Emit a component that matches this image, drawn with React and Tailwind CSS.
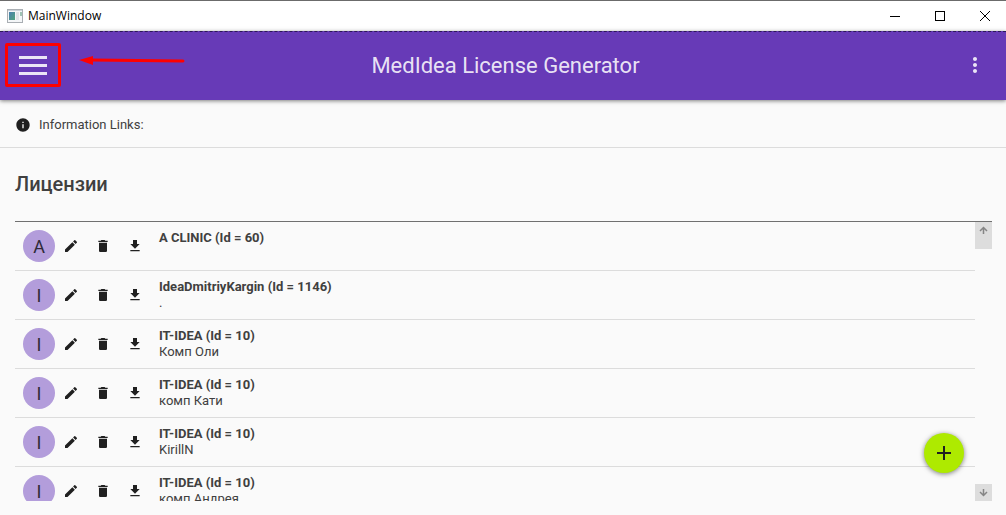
import { MdAdd, MdDelete, MdEdit, MdInfo, MdMoreVert } from 'react-icons/md';

const licenses = [
  { name: 'A CLINIC', id: 60, note: '' },
  { name: 'IdeaDmitriyKargin', id: 1146, note: '.' },
  { name: 'IT-IDEA', id: 10, note: 'Комп Оли' },
  { name: 'IT-IDEA', id: 10, note: 'комп Кати' },
  { name: 'IT-IDEA', id: 10, note: 'KirillN' },
  { name: 'IT-IDEA', id: 10, note: 'комп Андрея' },
];

const DownloadIcon = () => (
  <svg width="16" height="16" viewBox="0 0 24 24" fill="currentColor">
    <path d="M5 20h14v-2H5v2zM19 9h-4V3H9v6H5l7 7 7-7z" />
  </svg>
);

const ArrowIcon = ({ className }) => (
  <svg width="9" height="9" viewBox="0 0 9 9" fill="none" stroke="currentColor" strokeWidth="1.5" className={className}>
    <path d="M4.5 8V1.5M1 5l3.5-3.5L8 5" />
  </svg>
);

const IconButton = ({ label, children }) => (
  <button type="button" aria-label={label} className="flex h-8 w-8 items-center justify-center text-[#202020]">
    {children}
  </button>
);

const TitleBar = () => (
  <div className="flex h-[31px] shrink-0 items-center border-t border-[#6b6b6b] bg-white pl-[7px] text-black">
    <svg width="16" height="14" viewBox="0 0 16 14" className="mr-[5px]">
      <defs>
        <linearGradient id="pane" x1="0" y1="0" x2="1" y2="1">
          <stop offset="0" stopColor="#4a80b0" />
          <stop offset="1" stopColor="#4fa37c" />
        </linearGradient>
      </defs>
      <rect x="0.5" y="0.5" width="15" height="13" fill="#f4f6f8" stroke="#a9aeb3" />
      <path d="M1 1.5h14" stroke="#c9d1d8" />
      <rect x="2" y="3" width="6" height="8" fill="url(#pane)" />
      <rect x="9" y="3" width="3" height="8" fill="#dfe3e6" />
      <rect x="13" y="3" width="2" height="4" fill="#9fc3b4" />
    </svg>
    <span className="font-['Open_Sans','Noto_Sans',sans-serif] text-[12px]">MainWindow</span>
    <div className="mr-[-1px] ml-auto flex h-full">
      <button type="button" aria-label="Minimize" className="flex w-[45px] items-center justify-center">
        <svg width="10" height="10" stroke="black"><path d="M0 5.5h10" /></svg>
      </button>
      <button type="button" aria-label="Maximize" className="flex w-[45px] items-center justify-center">
        <svg width="10" height="10" fill="none" stroke="black"><rect x="0.5" y="0.5" width="9" height="9" /></svg>
      </button>
      <button type="button" aria-label="Close" className="flex w-[45px] items-center justify-center">
        <svg width="10" height="10" stroke="black"><path d="M0 0l10 10M10 0L0 10" /></svg>
      </button>
    </div>
  </div>
);

const AppBar = () => (
  <header className="relative z-10 grid h-[69px] shrink-0 grid-cols-[1fr_auto_1fr] items-center border-t border-dashed border-[#2b1a55] bg-[#673ab7] pb-[2px] pl-[5px] text-white/87 shadow-[0_1px_4px_rgba(0,0,0,0.5)]">
    <div className="flex items-center gap-[18px]">
      <button type="button" aria-label="Menu" className="flex h-[44px] w-[56px] items-center justify-center rounded-xs border-3 border-[#ff0000]">
        <svg width="28" height="19" viewBox="0 0 28 19" fill="currentColor">
          <path d="M0 0h28v3H0zM0 8h28v3H0zM0 16h28v3H0z" />
        </svg>
      </button>
      <svg width="106" height="12" viewBox="0 0 106 12" className="mb-[10px]">
        <path d="M13 6l91 1" stroke="#ff0000" strokeWidth="3" strokeLinecap="round" />
        <path d="M0 6l14-4v9z" fill="#ff0000" />
      </svg>
    </div>
    <h1 className="text-[22px]">MedIdea License Generator</h1>
    <button type="button" aria-label="More" className="mr-[19px] justify-self-end">
      <MdMoreVert size={24} />
    </button>
  </header>
);

const LicenseRow = ({ name, id, note }) => (
  <li className="flex h-[49px] border-b border-[#dcdcdc] px-2 pt-2">
    <div className="flex h-8 w-8 shrink-0 items-center justify-center rounded-full bg-[#b39ddb] text-[18px] text-[#2f2a38]">
      {name[0]}
    </div>
    <div className="flex shrink-0">
      <IconButton label="Edit"><MdEdit size={16} /></IconButton>
      <IconButton label="Delete"><MdDelete size={16} /></IconButton>
      <IconButton label="Download"><DownloadIcon /></IconButton>
    </div>
    <div className="ml-2 text-[13px] leading-4">
      <p className="font-bold">{name} (Id = {id})</p>
      <p>{note}</p>
    </div>
  </li>
);

const App = () => {
  return (
    <div className="relative flex h-screen flex-col overflow-hidden bg-[#fafafa] font-[Roboto,sans-serif] text-[#404040]">
      <TitleBar />
      <AppBar />

      <div className="flex h-12 shrink-0 items-center gap-2 border-b border-[#dcdcdc] px-[15px] pt-[2px] text-[13px]">
        <MdInfo size={16} className="text-[#202020]" />
        <span>Information Links:</span>
      </div>

      <main className="flex min-h-0 flex-1 flex-col px-[15px] pb-[14px]">
        <h2 className="flex h-[73px] shrink-0 items-center pb-[2px] text-[20px] font-medium">Лицензии</h2>

        <div className="mr-[-1px] flex min-h-0 flex-1 border-t border-[#707070]">
          <ul className="min-w-0 flex-1 overflow-hidden">
            {licenses.map((item, idx) => (
              <LicenseRow key={idx} {...item} />
            ))}
          </ul>
          <div className="flex w-[17px] shrink-0 flex-col justify-between text-[#858585]">
            <button type="button" aria-label="Scroll up" className="flex h-[27px] justify-center bg-[#dddddd] pt-1">
              <ArrowIcon />
            </button>
            <button type="button" aria-label="Scroll down" className="flex h-[17px] items-center justify-center bg-[#dddddd]">
              <ArrowIcon className="rotate-180" />
            </button>
          </div>
        </div>
      </main>

      <button type="button" aria-label="Add license" className="absolute right-[42px] bottom-[42px] flex h-10 w-10 items-center justify-center rounded-full bg-[#aeea00] text-[#202020] shadow-[0_1px_5px_rgba(0,0,0,0.5)]">
        <MdAdd size={24} />
      </button>
    </div>
  );
};

export default App;
